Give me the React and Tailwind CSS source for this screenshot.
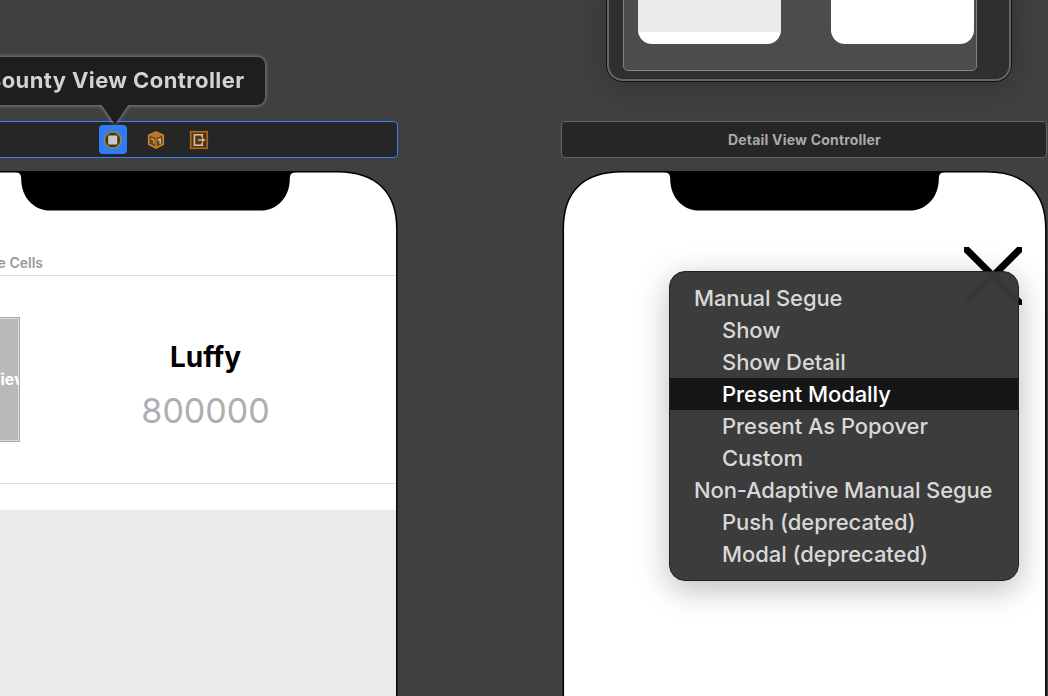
import React from "react";

const segues = [
  { label: "Manual Segue", header: true },
  { label: "Show" },
  { label: "Show Detail" },
  { label: "Present Modally", active: true },
  { label: "Present As Popover" },
  { label: "Custom" },
  { label: "Non-Adaptive Manual Segue", header: true },
  { label: "Push (deprecated)" },
  { label: "Modal (deprecated)" },
];

function Notch() {
  return (
    <svg className="block h-[40px] w-[282px] shrink-0" viewBox="0 0 282 40" fill="#000">
      <path d="M0 0H281V1.3H280.5C276.5 1.3 274.8 3.5 274.8 8C274.8 26 262.5 39.6 245.5 39.6H35.5C18.5 39.6 6.2 26 6.2 8C6.2 3.5 4.5 1.3 0.5 1.3H0Z" />
    </svg>
  );
}

function Device({ children }) {
  return (
    <div className="relative ml-[1px] h-[600px] w-[485px]">
      <svg className="absolute inset-0 h-[600px] w-[485px]" viewBox="0 0 485 600">
        <path
          d="M1.3 600V58C1.3 21 21 0.8 60 0.8H424C463 0.8 483.8 21 483.8 58V600"
          fill="#fff"
          stroke="#000"
          strokeWidth="1.5"
        />
      </svg>
      <div className="relative flex h-full flex-col items-center">
        <Notch />
        {children}
      </div>
    </div>
  );
}

function ControllerIcon() {
  return (
    <div className="flex h-[29px] w-[28px] items-center justify-center rounded-[4px] bg-[#2f7cf6]">
      <svg className="h-[20px] w-[20px]" viewBox="0 0 20 20">
        <circle cx="9.7" cy="10" r="8.3" fill="#413a26" stroke="#a3893c" strokeWidth="1.4" />
        <rect x="5.2" y="5.5" width="9" height="9" fill="#c9c9c9" />
      </svg>
    </div>
  );
}

function ResponderIcon() {
  return (
    <svg className="h-[20px] w-[20px]" viewBox="0 0 20 20" strokeLinejoin="round">
      <path d="M10 2L17.3 5.3V14.3L10 18L2.7 14.3V5.3Z" fill="#6b4417" stroke="#c98535" strokeWidth="1.6" />
      <path d="M3 5.5L10 8.2L17 5.5L10 2.3Z" fill="#b57529" />
      <path d="M10 8.2V17.5" stroke="#c98535" strokeWidth="1.3" />
      <path d="M4.8 8.6L7.8 9.9V13.8" fill="none" stroke="#cda77b" strokeWidth="1.2" />
      <path d="M12 10.4L14.2 9V13.8" fill="none" stroke="#d9c0a1" strokeWidth="1.5" />
    </svg>
  );
}

function ExitIcon() {
  return (
    <svg className="h-[20px] w-[20px]" viewBox="0 0 20 20">
      <rect x="1.7" y="1.7" width="16.6" height="16.6" fill="#56340d" stroke="#a86a21" strokeWidth="1.6" />
      <path d="M13.2 7.4V4.8H5.4V15.2H13.2V12.6" fill="none" stroke="#d5c3ad" strokeWidth="1.6" />
      <path d="M9 10H14" stroke="#d5c3ad" strokeWidth="1.4" />
      <path d="M13.2 7.6L16.3 10L13.2 12.4Z" fill="#d5c3ad" />
    </svg>
  );
}

function Minimap() {
  return (
    <div className="absolute left-[606px] top-[-20px] h-[102px] w-[406px] rounded-b-[17px] border border-[#111] bg-[#2f2f2f] shadow-[0_5px_30px_rgba(0,0,0,0.22)]">
      <div className="flex h-full rounded-b-[16px] border-2 border-[#666] pl-[14px]">
        <div className="flex h-[88px] w-[354px] items-start gap-[50px] rounded-b-[5px] border border-[#858585] bg-[#4c4c4c] pl-[14px]">
          <div className="flex h-[60px] w-[143px] flex-col overflow-hidden rounded-b-[14px] bg-white">
            <div className="h-[48px] bg-[#eaeaea]" />
          </div>
          <div className="h-[60px] w-[143px] rounded-b-[14px] bg-white" />
        </div>
      </div>
    </div>
  );
}

function BountyScene() {
  return (
    <section className="absolute left-[-88px] top-[121px] flex w-[486px] flex-col items-start gap-[13px]">
      <header className="flex h-[37px] w-full items-center justify-center gap-[19px] rounded-[4px] border border-[#3482ff] bg-[#262626] pr-[2px]">
        <ControllerIcon />
        <div className="flex gap-[23px]">
          <ResponderIcon />
          <ExitIcon />
        </div>
      </header>
      <Device>
        <div className="flex h-[65px] w-[481px] items-end border-b border-[#dcdcdc] pb-[4px]">
          <div className="w-[128px] whitespace-nowrap text-right text-[14px] font-semibold leading-[17px] text-[#98989a]">
            Prototype Cells
          </div>
        </div>
        <div className="flex h-[208px] w-[481px] items-center border-b border-[#dcdcdc]">
          <div className="ml-[4px] flex h-[125px] w-[101px] items-center justify-center overflow-hidden border border-[#aaa] bg-[#b9b9b9] shadow-[inset_0_0_0_1px_#dcdcdc]">
            <span className="whitespace-nowrap pb-[1px] pl-[14px] text-[16px] font-bold text-white">UIImageView</span>
          </div>
          <div className="ml-[85.5px] flex w-[200px] flex-col items-center gap-[16px] pt-[12px]">
            <div className="text-[28px] font-bold leading-[34px] text-black">Luffy</div>
            <div className="text-[34px] font-normal leading-[42px] text-[#aeaeb2]">800000</div>
          </div>
        </div>
        <div className="h-[26px]" />
        <div className="w-[481px] flex-1 bg-[#eaeaea]" />
      </Device>
    </section>
  );
}

function DetailScene() {
  return (
    <section className="absolute left-[561px] top-[121px] flex w-[486px] flex-col items-start gap-[13px]">
      <header className="flex h-[37px] w-full items-center justify-center rounded-[4px] border border-[#666] bg-[#262626] pl-[1px] text-[14px] font-bold tracking-[0.2px] text-[#aaa]">
        Detail View Controller
      </header>
      <Device>
        <div className="flex w-full justify-end pr-[25px] pt-[36px]">
          <svg className="h-[58px] w-[58px]" viewBox="0 0 58 58" stroke="#000" strokeWidth="7">
            <path d="M-2 -2L60 60M60 -2L-2 60" />
          </svg>
        </div>
      </Device>
    </section>
  );
}

function Tooltip() {
  return (
    <div className="absolute left-[-40px] top-[56.5px] flex flex-col drop-shadow-[0_0_2px_rgba(190,190,190,0.75)]">
      <div className="flex h-[48px] w-[304.5px] items-center justify-end rounded-[8px] bg-[#1e1e1e] pr-[20px]">
        <span className="whitespace-nowrap text-[22px] font-bold tracking-[0.4px] text-[#d2d2d2]">
          Bounty View Controller
        </span>
      </div>
      <svg className="ml-[140px] h-[20px] w-[30px]" viewBox="0 0 30 20" fill="#1e1e1e">
        <path d="M0 0H30C28 0 27 2 25.5 4L15 19.5L4.5 4C3 2 2 0 0 0Z" />
      </svg>
    </div>
  );
}

function SegueMenu() {
  return (
    <nav className="absolute left-[669px] top-[271px] h-[310px] w-[350px] rounded-[16px] border border-[#222] bg-[#383838]/98 pt-[10px] shadow-[0_8px_32px_rgba(0,0,0,0.27)]">
      {segues.map((s) => (
        <div
          key={s.label}
          className={`flex h-[32px] items-center whitespace-nowrap text-[22px] font-[450] ${
            s.header ? "pl-[24px] tracking-[-0.13px]" : "pl-[52px] tracking-[-0.07px]"
          } ${s.active ? "bg-[#161616] text-white" : "text-[#d8d8d8]"}`}
        >
          {s.label}
        </div>
      ))}
    </nav>
  );
}

export default function App() {
  return (
    <main className="relative h-[696px] w-[1048px] overflow-hidden bg-[#404040] font-['Inter',sans-serif]">
      <Minimap />
      <BountyScene />
      <DetailScene />
      <Tooltip />
      <SegueMenu />
    </main>
  );
}
